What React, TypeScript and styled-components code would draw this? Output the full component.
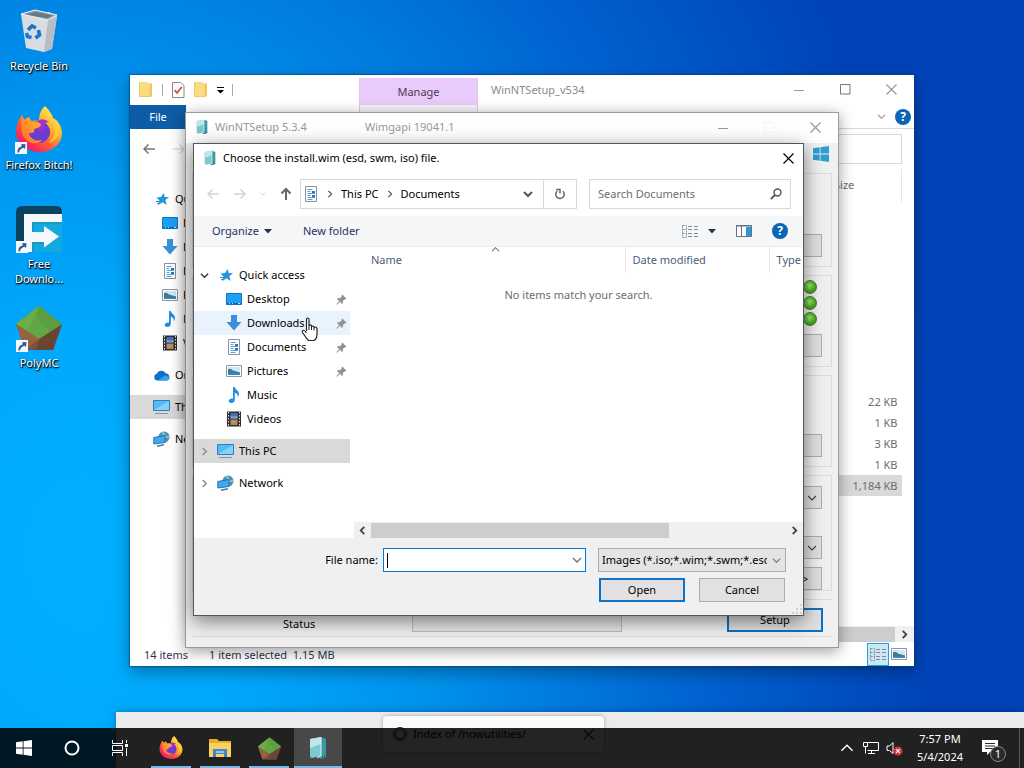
import React from "react";
import styled, { createGlobalStyle, css } from "styled-components";

const Global = createGlobalStyle`
  * { box-sizing: border-box; }
  body { margin: 0; overflow: hidden; }
  body, button, input, select, table {
    font-family: "Noto Sans", "Open Sans", sans-serif;
    font-size: 11px;
    line-height: 16px;
    color: #000;
  }
  button, input, select { margin: 0; padding: 0; border: 0; border-radius: 0; background: none; outline: none; }
  svg { display: block; flex: none; }
`;

/* ---------- icons ---------- */

type IconProps = { size?: number };

const Star = () => (
  <svg width="16" height="16" viewBox="0 0 16 16">
    <path d="M9.8 2 10.600 6 15 6.3 11.4 9 12.600 13.900 8.6 11.200 4 14.200 5.500 9.500 2.500 6.600 7 6z" fill="#2196dc" />
    <path d="M2 10.500h4M3 12.500h3" stroke="#2196dc" strokeWidth="1.200" />
  </svg>
);
const DesktopGlyph = () => (
  <svg width="16" height="16" viewBox="0 0 16 16">
    <path d="M.5 2.500h15v11H.5z" fill="#1aa0f4" stroke="#0c74c4" />
    <path d="M1 12.500h14" stroke="#0a62ae" />
    <path d="M3 12.500h1M6 12.500h1M12 12.500h2" stroke="#bfe3fa" />
  </svg>
);
const DownGlyph = () => (
  <svg width="16" height="16" viewBox="0 0 16 16">
    <path d="M5 0h6v7h4.500L8 15.500.5 7H5z" fill="#3b8edb" />
  </svg>
);
const DocGlyph = () => (
  <svg width="16" height="16" viewBox="0 0 16 16">
    <path d="M2.500.5h11v15h-11z" fill="#fff" stroke="#8793a0" />
    <path d="M4.500 3.500h5M4.500 5.500h3M4.500 7.500h7.500M4.500 9.500h3M4.500 11.500h7.500M4.500 13.500h5" stroke="#5a9fd8" />
    <path d="M9 5h3v2H9zM9 9h3v2H9z" fill="#1f78c4" />
  </svg>
);
const PictureGlyph = () => (
  <svg width="16" height="16" viewBox="0 0 16 16">
    <path d="M.5 2.500h15v11H.5z" fill="#fff" stroke="#8b98a3" />
    <path d="M2 4h12v8H2z" fill="#cfe8f8" />
    <path d="M2 6q3-1 5 1.500l7 2V12H2z" fill="#3f7d88" />
    <path d="M2 10.500h12V12H2z" fill="#3d86c8" />
  </svg>
);
const MusicGlyph = () => (
  <svg width="16" height="16" viewBox="0 0 16 16">
    <path d="M7 0h1.800c.2 2.600 4.600 3.600 4.200 7.600-.1 1.200-.6 2-1.200 2.700.5-2.500-1-3.900-3-4.500V13c0 1.600-1.500 3-3.400 3S2.800 15.200 2.800 13.800 4.200 11.400 5.800 11.400c.5 0 .9.100 1.200.2z" fill="#1e90e0" />
  </svg>
);
const VideoGlyph = () => (
  <svg width="16" height="16" viewBox="0 0 16 16">
    <path d="M1 .5h14v15H1z" fill="#2d2d33" />
    <path d="M2.500 1v14M13.500 1v14" stroke="#e8e8e8" strokeDasharray="1.500 1.500" />
    <path d="M4.500 2h7v5.500h-7z" fill="#466fbb" />
    <path d="M4.500 8.500h7V14h-7z" fill="#c08a35" />
    <path d="M4.500 4.500q3 2 7 0v3h-7zM5.500 10h4v2h-4z" fill="#7fa0d8" />
  </svg>
);
const CloudGlyph = () => (
  <svg width="16" height="16" viewBox="0 0 16 16">
    <path d="M3.500 13.500a3.400 3.400 0 0 1-.6-6.700A5 5 0 0 1 12 6.400a3.600 3.600 0 0 1 .6 7.100z" fill="#0f6fc6" />
    <path d="M3.500 13.500 11 8.600q4 .4 4.600 3-.6 1.900-3 1.900z" fill="#28a8ea" />
  </svg>
);
const PcGlyph = () => (
  <svg width="17" height="16" viewBox="0 0 17 16">
    <path d="M.5 1.500h16v10H.5z" fill="#56b8f5" stroke="#2b7fc0" />
    <path d="M1 11 16 2v9z" fill="#85d0fb" />
    <path d="M2 14.500h13" stroke="#7e93a3" />
  </svg>
);
const NetGlyph = () => (
  <svg width="17" height="16" viewBox="0 0 17 16">
    <circle cx="11" cy="6" r="5.500" fill="#4f90b8" />
    <path d="M9 1.500q4 2 2 4.500 3 1 5-1" fill="none" stroke="#9accc4" strokeWidth="1.500" />
    <path d="M.8 6.500 12 4.500v7L.8 13z" fill="#41a8ee" stroke="#2474b4" />
    <path d="M4 15.200l7-1.500" stroke="#3e7ea6" strokeWidth="1.500" />
  </svg>
);
const Pin = () => (
  <svg width="11" height="11" viewBox="0 0 11 11">
    <path d="M6.300.5 10.500 4.700l-1 .8-.8-.2L6.800 7.200l.1 1.900-.9.900L3.900 7.800.8 10.700.3 10.200 3.200 7.100 1 4.900l.9-.8 1.900.1L5.700 2.300l-.2-.9z" fill="#8d949a" />
  </svg>
);
const Package = ({ size = 16 }: IconProps) => (
  <svg width={size} height={size} viewBox="0 0 24 24">
    <path d="M4 3 15 1v19L6 22q-2 0-2-2z" fill="#7cc8cc" />
    <path d="M4 3 15 1v7L4 12z" fill="#bfe6e6" />
    <path d="M15 1l5 2v18l-5 2-4-2 4-1z" fill="#3c98a2" />
    <path d="M15 1v19l-4 1.500" fill="none" stroke="#e4f6f6" />
    <path d="M16.500 20v2M18.500 19v2" stroke="#1a6b80" />
  </svg>
);
const Folder = () => (
  <svg width="16" height="16" viewBox="0 0 16 16">
    <path d="M1 0h9v1.500h4V13l-1 2H1z" fill="#fadc80" />
    <path d="M11.500 1.500H14V13l-1 2h-1.500z" fill="#f0c860" />
    <path d="M1.500.5V15M1 14.500h12" stroke="#f0cb62" />
  </svg>
);
const TickPage = () => (
  <svg width="14" height="16" viewBox="0 0 14 16">
    <path d="M1.500.5h8l3.500 3v12H1.500z" fill="#fff" stroke="#888" />
    <path d="M3.500 8 6 10.800 10.800 5" fill="none" stroke="#d8503c" strokeWidth="1.800" />
  </svg>
);
const Chevron = ({ dir = "down", color = "#444", size = 9, weight = 1.500 }: { dir?: "down" | "up" | "left" | "right"; color?: string; size?: number; weight?: number }) => {
  const d = { down: "M1 3 5 7 9 3", up: "M1 7 5 3 9 7", left: "M7 1 3 5 7 9", right: "M3 1 7 5 3 9" }[dir];
  return (
    <svg width={size} height={size} viewBox="0 0 10 10">
      <path d={d} fill="none" stroke={color} strokeWidth={weight} />
    </svg>
  );
};
const Triangle = ({ color = "#2b2f45" }: { color?: string }) => (
  <svg width="8" height="5" viewBox="0 0 8 5"><path d="M0 0h8L4 4.500z" fill={color} /></svg>
);
const Overflow = () => (
  <svg width="7" height="8" viewBox="0 0 7 8"><path d="M0 1.500h7" stroke="#000" /><path d="M0 4h7L3.500 7.500z" fill="#000" /></svg>
);
const Arrow = ({ dir, color }: { dir: "left" | "right" | "up"; color: string }) => {
  const d = { left: "M13 7H2M6.500 2.500 2 7l4.500 4.500", right: "M1 7h11M7.500 2.500 12 7l-4.500 4.500", up: "M7 13V2M2.500 6.500 7 2l4.500 4.500" }[dir];
  return (
    <svg width="14" height="14" viewBox="0 0 14 14"><path d={d} fill="none" stroke={color} strokeWidth={dir === "up" ? 2 : 1.500} /></svg>
  );
};
const Minimise = ({ color }: { color: string }) => (
  <svg width="11" height="11" viewBox="0 0 11 11"><path d="M0 6.500h10" stroke={color} /></svg>
);
const Maximise = ({ color }: { color: string }) => (
  <svg width="11" height="11" viewBox="0 0 11 11"><path d="M.5.5h9.500v9.500H.5z" fill="none" stroke={color} /></svg>
);
const Close = ({ color }: { color: string }) => (
  <svg width="11" height="11" viewBox="0 0 11 11"><path d="M.5.5l10 10M10.500.5l-10 10" stroke={color} strokeWidth="1.200" /></svg>
);
const Windows = ({ size, color }: { size: number; color: string }) => (
  <svg width={size} height={size} viewBox="0 0 16 16">
    <path d="M0 2.200 6.700 1.300V7.600H0zM7.500 1.200 16 0v7.600H7.500zM0 8.400h6.700v6.300L0 13.800zM7.500 8.400H16V16l-8.500-1.200z" fill={color} />
  </svg>
);
const DetailsGlyph = () => (
  <svg width="17" height="13" viewBox="0 0 17 13">
    <path d="M.5.5h4v12h-4zM.5 4.500h4M.5 8.500h4" fill="none" stroke="#8a8f96" strokeDasharray="2 1" />
    <path d="M6 1.500h4M12 1.500h4M6 4.500h4M12 4.500h4M6 8.500h4M12 8.500h4M6 11.500h4M12 11.500h4" stroke="#85898f" />
  </svg>
);
const PaneGlyph = () => (
  <svg width="16" height="12" viewBox="0 0 16 12">
    <path d="M.5.5h15v11H.5z" fill="#fff" stroke="#5f7285" />
    <path d="M0 1h16M5.500 1v10" stroke="#5f7285" />
    <path d="M10 2h5v9h-5z" fill="#2f95dc" />
  </svg>
);
const Magnifier = () => (
  <svg width="12" height="12" viewBox="0 0 12 12">
    <circle cx="7.500" cy="4.500" r="3.500" fill="none" stroke="#555" strokeWidth="1.400" />
    <path d="M5 7 .8 11.200" stroke="#555" strokeWidth="1.800" />
  </svg>
);
const Refresh = () => (
  <svg width="12" height="12" viewBox="0 0 12 12">
    <path d="M8.800 3.200a4.200 4.200 0 1 1-5.400-.2" fill="none" stroke="#666" strokeWidth="1.500" />
    <path d="M2 1.500h4v4" fill="none" stroke="#666" strokeWidth="1.500" />
  </svg>
);
const Firefox = ({ size = 48 }: IconProps) => (
  <svg width={size} height={size} viewBox="0 0 48 48">
    <defs>
      <linearGradient id="fxBody" x1="0.850" y1="0.100" x2="0.200" y2="0.900">
        <stop offset="0" stopColor="#fff04a" />
        <stop offset=".35" stopColor="#ffb02e" />
        <stop offset=".65" stopColor="#ff5a36" />
        <stop offset="1" stopColor="#f0186a" />
      </linearGradient>
      <linearGradient id="fxHead" x1="1" y1="0" x2="0" y2="1">
        <stop offset="0" stopColor="#ffbf2a" />
        <stop offset="1" stopColor="#ff6a30" />
      </linearGradient>
    </defs>
    <path d="M30 0c4 4 7 8 8 12 5 2 9 9 9 15 0 11-10 19-22 19S1 38 1 26C1 19 4 13 7 9l2 5 4-3 3 4 8-1c0-5 2-11 6-14z" fill="url(#fxBody)" />
    <circle cx="24" cy="26" r="11" fill="#6c3bd0" />
    <path d="M22 15q6-4 12 1-4 0-5 3 2 5-4 7-5-4-3-11z" fill="#a532c8" />
    <path d="M7 9l2 5 5-3 3 5c4-1 8 0 9 3-1 3-6 3-7 5 1 3-2 3-5 3 1 6 7 9 13 7-4 6-17 4-20-7-1-6-1-12 0-18z" fill="url(#fxHead)" />
    <path d="M37 12c6 9 3 20-4 25 14-3 15-17 4-25z" fill="#ffd23c" opacity=".7" />
  </svg>
);
const PolyMC = ({ size = 46 }: IconProps) => (
  <svg width={size} height={size} viewBox="0 0 46 46">
    <path d="M23 1 46 19 37 45H9L0 19z" fill="#805038" />
    <path d="M23 34 46 19 37 45H20z" fill="#6a4531" />
    <path d="M0 19 23 34 9 45z" fill="#9a6042" />
    <path d="M23 1 46 19 23 34 0 19z" fill="#62a744" />
    <path d="M23 1 46 19 34 26 20 12z" fill="#5b9f43" />
    <path d="M23 1 12 26 0 19z" fill="#6aae48" />
  </svg>
);
const RecycleBin = () => (
  <svg width="40" height="44" viewBox="0 0 40 44">
    <path d="M2 5 30 3l8 4-5 33-8 3-18-4z" fill="#d9dde1" />
    <path d="M29 11 38 7l-5 33-8 3z" fill="#b7bdc4" />
    <path d="M2 5 16 1l22 5-9 5z" fill="#8a9aa6" />
    <path d="M6 5.500 17 3l16 3.500-5 2.500z" fill="#657986" />
    <path d="M2 5l27 6 9-5M2 5l14-4 22 5" fill="none" stroke="#eef3f6" />
    <path d="M9 21l4-4 4 2M19.500 21l1 5-4 3M12.500 28.500l-4-1-1-3.500" fill="none" stroke="#1a76cc" strokeWidth="3.600" />
  </svg>
);
const FreeDownload = () => (
  <svg width="46" height="46" viewBox="0 0 46 46">
    <path d="M6 0h34q6 0 6 6v6H16v34H0V6q0-6 6-6z" fill="#0b4260" />
    <path d="M14 14h32v32H14z" fill="#14a9dd" />
    <path d="M8 8h38v8H16v10h12v-6l15 10.500-15 11V36H16v10H8z" fill="#f3f8fa" />
    <path d="M16 16h30v2H18v8h-2zM16 36h12v2H18v8h-2z" fill="#1a88b4" opacity=".5" />
  </svg>
);
const ShortcutMark = () => (
  <svg width="12" height="12" viewBox="0 0 12 12">
    <path d="M0 0h12v12H0z" fill="#f4f6f8" />
    <path d="M2.500 10.500q-.5-5 4-6V2l4 .300-.5 4.700-1.500-1.200Q4.500 7 4 10.500z" fill="#2c5ca0" />
  </svg>
);
const FileManager = () => (
  <svg width="24" height="24" viewBox="0 0 24 24">
    <path d="M1 3h8l2 2h12v16H1z" fill="#e8a92c" />
    <path d="M1 7h22v14H1z" fill="#fbd35c" />
    <path d="M5 13h14v8h-3v-3H8v3H5z" fill="#3d86d0" />
    <path d="M8 15h8v2H8z" fill="#8cc4f2" />
  </svg>
);
const Hand = () => (
  <svg width="17" height="25" viewBox="0 0 17 25">
    <path d="M5.500 14V2.500q0-1.500 1.200-1.500T8 2.500V9q0-1.200 1.200-1.200T10.500 9v1q0-1 1.200-1t1.300 1v1q0-1 1.300-1T16 11.500V17q0 5-3 6.500H7.500Q5 21 1.500 15.500q-.6-1.600.6-2.200 1.200-.4 3.400 2.500" fill="#fff" stroke="#222" strokeWidth="1.200" />
    <path d="M8 9v4M10.500 10v3M13 11v2.500" stroke="#222" />
  </svg>
);

/* ---------- desktop ---------- */

const Desktop = styled.main`
  position: relative;
  height: 100vh;
  overflow: hidden;
  background: radial-gradient(ellipse 88% 150% at 8% 72%, #00b0ff 0%, #00a8fc 20%, #0092ec 40%, #0062d0 70%, #0043b8 95%);
`;
const Shortcuts = styled.nav`
  display: flex;
  flex-direction: column;
  width: 78px;
  padding-top: 7px;
`;
const Shortcut = styled.a`
  display: flex;
  flex-direction: column;
  align-items: center;
  height: 99px;
  color: #fff;
  text-align: center;
  text-decoration: none;
  text-shadow: 0 1px 2px #000, 1px 1px 1px #000;
`;
const Picture = styled.span`
  position: relative;
  display: flex;
  align-items: center;
  justify-content: center;
  height: 48px;
`;
const Mark = styled.span`
  position: absolute;
  left: 0;
  bottom: 0;
`;
const Caption = styled.span`
  width: 78px;
  padding-top: 3px;
  line-height: 15px;
  white-space: pre-line;
`;

const windowFrame = css`
  position: absolute;
  display: flex;
  flex-direction: column;
`;
const Row = styled.div`
  display: flex;
  align-items: center;
`;
const Spacer = styled.div`
  flex: 1;
`;
const IconButton = styled.button<{ $w?: number; $h?: number }>`
  display: flex;
  flex: none;
  align-items: center;
  justify-content: center;
  width: ${(p) => p.$w ?? 24}px;
  height: ${(p) => p.$h ?? 24}px;
`;
const HelpButton = styled.button`
  width: 16px;
  height: 16px;
  border-radius: 50%;
  background: #0a64b8;
  color: #fff;
  font-weight: 700;
  font-size: 12px;
`;

/* ---------- navigation tree ---------- */

const Tree = styled.ul`
  list-style: none;
  margin: 0;
  padding: 0;
  width: 156px;
  flex: none;
`;
const Branch = styled.li<{ $gap?: boolean }>`
  margin-top: ${(p) => (p.$gap ? 8 : 0)}px;
`;
const TreeItem = styled.button<{ $sub?: boolean; $tone?: string }>`
  display: flex;
  align-items: center;
  width: 100%;
  height: 24px;
  padding: 0 3px 0 ${(p) => (p.$sub ? 31 : 6)}px;
  background: ${(p) => p.$tone ?? "transparent"};
  white-space: nowrap;
`;
const Expander = styled.span`
  width: 17px;
`;
const TreeIcon = styled.span`
  display: flex;
  justify-content: center;
  width: 17px;
  margin-right: 5px;
`;
const TreeLabel = styled.span`
  flex: 1;
  text-align: left;
`;

const folders = [
  { name: "Desktop", icon: <DesktopGlyph />, pinned: true },
  { name: "Downloads", icon: <DownGlyph />, pinned: true },
  { name: "Documents", icon: <DocGlyph />, pinned: true },
  { name: "Pictures", icon: <PictureGlyph />, pinned: true },
  { name: "Music", icon: <MusicGlyph />, pinned: false },
  { name: "Videos", icon: <VideoGlyph />, pinned: false },
];

const NavTree = ({ full, hovered }: { full?: boolean; hovered?: string }) => {
  const root = (name: string, icon: React.ReactNode, dir: "down" | "right", tone?: string, gap?: boolean) => (
    <Branch $gap={gap}>
      <TreeItem $tone={tone}>
        <Expander>{full && <Chevron dir={dir} color={dir === "down" ? "#333" : "#888"} />}</Expander>
        <TreeIcon>{icon}</TreeIcon>
        <TreeLabel>{name}</TreeLabel>
      </TreeItem>
    </Branch>
  );
  return (
    <Tree>
      {root("Quick access", <Star />, "down")}
      {folders.map((f) => (
        <Branch key={f.name}>
          <TreeItem $sub $tone={hovered === f.name ? "#e8f3fd" : undefined}>
            <TreeIcon>{f.icon}</TreeIcon>
            <TreeLabel>{f.name}</TreeLabel>
            {full && f.pinned && <Pin />}
          </TreeItem>
        </Branch>
      ))}
      {!full && root("OneDrive", <CloudGlyph />, "right", undefined, true)}
      {root("This PC", <PcGlyph />, "right", "#d9d9d9", true)}
      {root("Network", <NetGlyph />, "right", undefined, true)}
    </Tree>
  );
};

/* ---------- file manager window ---------- */

const Explorer = styled.section`
  ${windowFrame}
  left: 130px;
  top: 75px;
  width: 784px;
  height: 591px;
  background: #fff;
  box-shadow: 0 0 1px 1px rgba(0, 60, 120, 0.5), 0 6px 16px rgba(0, 0, 0, 0.35);
`;
const ExplorerTitle = styled(Row)`
  align-items: flex-start;
  height: 30px;
  color: #8b8b8b;
`;
const QuickBar = styled(Row)`
  width: 229px;
  height: 30px;
  padding-left: 8px;
  gap: 8px;
`;
const Divider = styled.span`
  width: 1px;
  height: 12px;
  background: #aaa;
`;
const ManageTab = styled.div`
  width: 119px;
  height: 35px;
  margin-top: 3px;
  border: 1px solid #dcc8ea;
  border-top: 0;
  background: linear-gradient(#e8cbfb 27px, #f6f4f7 27px);
  color: #4c3a58;
  line-height: 27px;
  text-align: center;
`;
const WindowName = styled.span`
  padding: 7px 0 0 13px;
`;
const RibbonTabs = styled(Row)`
  height: 24px;
  border-bottom: 1px solid #d8d8d8;
  padding-right: 3px;
  gap: 4px;
`;
const FileTab = styled.button`
  width: 56px;
  height: 24px;
  background: #0d5ca6;
  color: #fff;
`;
const ExplorerNav = styled(Row)`
  height: 40px;
  padding: 0 12px;
  gap: 16px;
`;
const SearchStub = styled.input`
  width: 120px;
  height: 30px;
  border: 1px solid #d9d9d9 !important;
`;
const ExplorerBody = styled.div`
  display: flex;
  flex: 1;
  min-height: 0;
`;
const TreePane = styled.div<{ $top: number }>`
  padding-top: ${(p) => p.$top}px;
`;
const FilePane = styled.div`
  display: flex;
  flex: 1;
  flex-direction: column;
  align-items: flex-end;
  min-width: 0;
`;
const SizeTable = styled.table`
  width: 80px;
  margin-right: 12px;
  border-collapse: collapse;
  color: #6d6d6d;
  text-align: right;
  th { height: 33px; padding: 0 0 2px 12px; border-right: 1px solid #e5e5e5; font-weight: 400; text-align: left; }
  td { height: 21px; padding: 0 4px 0 0; }
`;
const SizeRow = styled.tr<{ $selected?: boolean }>`
  background: ${(p) => (p.$selected ? "#d9d9d9" : "transparent")};
`;
const ScrollTrack = styled.div`
  display: flex;
  align-items: center;
  width: 100%;
  height: 16px;
  background: #f0f0f0;
`;
const ScrollThumb = styled.div<{ $w: string }>`
  width: ${(p) => p.$w};
  height: 15px;
  background: #cdcdcd;
`;
const StatusBar = styled(Row)`
  height: 24px;
  padding: 0 5px 0 14px;
  color: #2c3650;
`;
const StatusText = styled.span`
  margin-right: 21px;
  padding-top: 1px;
  white-space: pre;
`;
const ViewButton = styled(IconButton)<{ $on?: boolean }>`
  border: 1px solid ${(p) => (p.$on ? "#26a0da" : "transparent")};
  background: ${(p) => (p.$on ? "#cbe8f6" : "none")};
`;

const sizes = ["", "", "", "", "", "", "", "", "", "22 KB", "1 KB", "3 KB", "1 KB", "1,184 KB"];

const ExplorerWindow = () => (
  <Explorer aria-label="WinNTSetup_v534">
    <ExplorerTitle>
      <QuickBar>
        <Folder />
        <Divider />
        <TickPage />
        <Folder />
        <Overflow />
        <Divider />
      </QuickBar>
      <ManageTab>Manage</ManageTab>
      <WindowName>WinNTSetup_v534</WindowName>
      <Spacer />
      <IconButton $w={46} $h={28} aria-label="Minimize"><Minimise color="#999" /></IconButton>
      <IconButton $w={46} $h={28} aria-label="Maximize"><Maximise color="#777" /></IconButton>
      <IconButton $w={46} $h={28} aria-label="Close"><Close color="#999" /></IconButton>
    </ExplorerTitle>
    <RibbonTabs>
      <FileTab>File</FileTab>
      <Spacer />
      <IconButton $w={20} aria-label="Expand ribbon"><Chevron color="#aaa" /></IconButton>
      <HelpButton aria-label="Help">?</HelpButton>
    </RibbonTabs>
    <ExplorerNav>
      <Arrow dir="left" color="#777" />
      <Arrow dir="right" color="#ddd" />
      <Spacer />
      <SearchStub aria-label="Search" />
    </ExplorerNav>
    <ExplorerBody>
      <TreePane $top={18}><NavTree /></TreePane>
      <FilePane>
        <SizeTable>
          <thead><tr><th>Size</th></tr></thead>
          <tbody>
            {sizes.map((s, i) => (
              <SizeRow key={i} $selected={i === 13}><td>{s}</td></SizeRow>
            ))}
          </tbody>
        </SizeTable>
        <Spacer />
        <ScrollTrack>
          <ScrollThumb $w="calc(100% - 19px)" />
          <IconButton $w={19} $h={16} aria-label="Scroll right"><Chevron dir="right" weight={2} /></IconButton>
        </ScrollTrack>
      </FilePane>
    </ExplorerBody>
    <StatusBar>
      <StatusText>14 items</StatusText>
      <StatusText>{"1 item selected  1.15 MB"}</StatusText>
      <Spacer />
      <ViewButton $w={22} $h={23} $on aria-label="Details view"><DetailsGlyph /></ViewButton>
      <ViewButton $w={20} $h={23} aria-label="Thumbnails"><PictureGlyph /></ViewButton>
    </StatusBar>
  </Explorer>
);

/* ---------- setup window ---------- */

const Setup = styled.section`
  ${windowFrame}
  left: 185px;
  top: 112px;
  width: 654px;
  height: 536px;
  border: 1px solid #9a9a9a;
  background: #f0f0f0;
  box-shadow: 0 3px 14px rgba(0, 0, 0, 0.4);
`;
const SetupTitle = styled(Row)`
  height: 30px;
  padding: 0 0 2px 8px;
  background: #fff;
  color: #999;
`;
const SetupName = styled.span`
  width: 155px;
  padding-left: 5px;
`;
const SetupBody = styled.div`
  display: flex;
  flex: 1;
  flex-direction: column;
  gap: 8px;
  padding: 0 6px 10px;
`;
const SetupTools = styled(Row)`
  justify-content: flex-end;
  height: 22px;
  padding: 0 3px;
`;
const Group = styled.div<{ $h: number; $end?: boolean; $pad?: number }>`
  display: flex;
  flex: none;
  flex-direction: column;
  align-items: flex-end;
  justify-content: ${(p) => (p.$end ? "flex-end" : "flex-start")};
  gap: 8px;
  height: ${(p) => p.$h}px;
  padding: ${(p) => p.$pad ?? 9}px 9px 9px;
  border: 1px solid #dcdcdc;
`;
const PlainButton = styled.button`
  display: flex;
  flex: none;
  align-items: center;
  justify-content: center;
  width: 40px;
  height: 23px;
  border: 1px solid #adadad;
  background: #e1e1e1;
`;
const DropButton = styled(PlainButton)`
  justify-content: flex-end;
  padding-right: 4px;
`;
const DropGroup = styled.div`
  display: flex;
  flex-direction: column;
  gap: 27px;
`;
const Lights = styled.div`
  display: flex;
  flex-direction: column;
  gap: 2px;
  padding-right: 5px;
`;
const Light = styled.span`
  width: 14px;
  height: 14px;
  border: 1px solid #4c7a3a;
  border-radius: 50%;
  background: radial-gradient(circle at 45% 40%, #a8ee70, #4eb828 50%, #24780e);
`;
const SetupFooter = styled(Row)`
  flex: 1;
  align-items: flex-end;
  padding: 0 9px 4px 91px;
  border-top: 1px solid #dcdcdc;
  border-bottom: 1px solid #dcdcdc;
`;
const Progress = styled.div`
  width: 210px;
  height: 24px;
  margin-left: 97px;
  border: 1px solid #bcbcbc;
  background: #e6e6e6;
`;
const PrimaryButton = styled.button<{ $w: number }>`
  width: ${(p) => p.$w}px;
  height: 24px;
  border: 2px solid #0b72c8;
  background: #e1e1e1;
`;

const SetupWindow = () => (
  <Setup aria-label="WinNTSetup 5.3.4">
    <SetupTitle>
      <Package />
      <SetupName>WinNTSetup 5.3.4</SetupName>
      <span>Wimgapi 19041.1</span>
      <Spacer />
      <IconButton $w={46} $h={28} aria-label="Minimize"><Minimise color="#999" /></IconButton>
      <IconButton $w={46} $h={28} aria-label="Maximize"><Maximise color="#f4f4f4" /></IconButton>
      <IconButton $w={46} $h={28} aria-label="Close"><Close color="#999" /></IconButton>
    </SetupTitle>
    <SetupBody>
      <SetupTools><Windows size={16} color="#2d9fd0" /></SetupTools>
      <Group $h={94} $end><PlainButton aria-label="Browse source" /></Group>
      <Group $h={92} $pad={4}>
        <Lights><Light /><Light /><Light /></Lights>
        <PlainButton aria-label="Select boot drive" />
      </Group>
      <Group $h={92} $end><PlainButton aria-label="Select installation drive" /></Group>
      <Group $h={116} $pad={10}>
        <DropGroup>
          <DropButton aria-label="Edition"><Chevron size={10} weight={1.200} /></DropButton>
          <DropButton aria-label="Mount letter"><Chevron size={10} weight={1.200} /></DropButton>
        </DropGroup>
        <PlainButton>&gt;&gt;</PlainButton>
      </Group>
      <SetupFooter>
        <span>Status</span>
        <Progress role="progressbar" aria-label="Status" />
        <Spacer />
        <PrimaryButton $w={96}>Setup</PrimaryButton>
      </SetupFooter>
    </SetupBody>
  </Setup>
);

/* ---------- open dialog ---------- */

const Dialog = styled.section`
  ${windowFrame}
  left: 193px;
  top: 143px;
  width: 611px;
  height: 473px;
  border: 1px solid #555;
  background: #fff;
  box-shadow: 0 5px 18px rgba(0, 0, 0, 0.5);
`;
const DialogTitle = styled(Row)`
  height: 30px;
  padding: 0 0 2px 8px;
  gap: 5px;
`;
const AddressRow = styled(Row)`
  height: 42px;
  padding: 0 12px 2px;
`;
const History = styled(Row)`
  width: 94px;
  gap: 13px;
`;
const Address = styled(Row)`
  flex: 1;
  height: 30px;
  padding-left: 2px;
  gap: 7px;
  border: 1px solid #d9d9d9;
`;
const RefreshButton = styled(IconButton)`
  border: 1px solid #d9d9d9;
  border-left: 0;
`;
const SearchBox = styled.label`
  display: flex;
  align-items: center;
  width: 202px;
  height: 30px;
  margin-left: 12px;
  padding: 0 8px;
  border: 1px solid #d9d9d9;
`;
const SearchInput = styled.input`
  flex: 1;
  min-width: 0;
  &::placeholder { color: #6d6d6d; opacity: 1; }
`;
const ToolRow = styled(Row)`
  height: 31px;
  padding: 0 15px 0 18px;
  border-bottom: 1px solid #e8eaec;
  background: #f5f6f7;
`;
const ToolButton = styled.button`
  display: flex;
  align-items: center;
  gap: 5px;
  margin-right: 31px;
  color: #1e3264;
`;
const ToolIcons = styled(Row)`
  gap: 9px;
`;
const DialogBody = styled.div`
  display: flex;
  flex: 1;
  min-height: 0;
`;
const ListPane = styled.div`
  display: flex;
  flex: 1;
  flex-direction: column;
  min-width: 0;
  padding-left: 4px;
`;
const Columns = styled.table`
  width: 100%;
  table-layout: fixed;
  border-collapse: collapse;
  th {
    height: 26px;
    padding: 0 0 0 7px;
    overflow: hidden;
    border-right: 1px solid #e5e5e5;
    color: #4c607a;
    font-weight: 400;
    text-align: left;
  }
  th:first-child { width: 271px; padding-left: 17px; }
  th:nth-child(2) { width: 144px; }
  th:last-child { border-right: 0; }
  td { height: 44px; padding-right: 1px; color: #6d6d6d; text-align: center; }
`;
const NameHead = styled.span`
  position: relative;
  display: block;
`;
const SortMark = styled.span`
  position: absolute;
  top: -7px;
  left: 120px;
`;
const DialogFooter = styled.form`
  position: relative;
  display: flex;
  flex-direction: column;
  gap: 6px;
  height: 77px;
  padding: 10px 17px 0 0;
  background: #f0f0f0;
`;
const FieldRow = styled(Row)<{ $inset?: number }>`
  justify-content: flex-end;
  padding-right: ${(p) => p.$inset ?? 0}px;
`;
const FieldLabel = styled.label`
  margin-right: 5px;
`;
const ComboBox = styled.div`
  display: flex;
  align-items: center;
  width: 203px;
  height: 24px;
  padding: 0 3px;
  border: 1px solid #0078d7;
  background: #fff;
`;
const Caret = styled.span`
  width: 1px;
  height: 15px;
  background: #000;
`;
const FileInput = styled.input`
  flex: 1;
  min-width: 0;
`;
const FilterBox = styled.div`
  position: relative;
  width: 188px;
  margin-left: 12px;
`;
const Filter = styled.select`
  display: block;
  width: 100%;
  height: 24px;
  padding: 0 18px 0 3px;
  border: 1px solid #adadad;
  background: #e4e4e4;
  appearance: none;
`;
const FilterArrow = styled.span`
  position: absolute;
  top: 8px;
  right: 5px;
  pointer-events: none;
`;
const CancelButton = styled.button`
  width: 86px;
  height: 24px;
  margin-left: 14px;
  border: 1px solid #adadad;
  background: #e1e1e1;
`;
const Grip = styled.span`
  position: absolute;
  right: 1px;
  bottom: 1px;
`;

const OpenDialog = () => (
  <Dialog role="dialog" aria-label="Choose the install.wim (esd, swm, iso) file.">
    <DialogTitle>
      <Package />
      <span>Choose the install.wim (esd, swm, iso) file.</span>
      <Spacer />
      <IconButton $w={30} $h={28} aria-label="Close"><Close color="#000" /></IconButton>
    </DialogTitle>
    <AddressRow>
      <History>
        <Arrow dir="left" color="#d4d4d4" />
        <Arrow dir="right" color="#d4d4d4" />
        <Chevron size={6} color="#ccc" />
        <Arrow dir="up" color="#666" />
      </History>
      <Address>
        <DocGlyph />
        <Chevron dir="right" size={8} color="#555" />
        <span>This PC</span>
        <Chevron dir="right" size={8} color="#555" />
        <span>Documents</span>
        <Spacer />
        <IconButton $w={30} aria-label="Previous locations"><Chevron size={10} color="#555" weight={2} /></IconButton>
      </Address>
      <RefreshButton $w={33} $h={30} aria-label="Refresh"><Refresh /></RefreshButton>
      <SearchBox>
        <SearchInput type="text" placeholder="Search Documents" aria-label="Search Documents" />
        <Magnifier />
      </SearchBox>
    </AddressRow>
    <ToolRow>
      <ToolButton>Organize <Triangle /></ToolButton>
      <ToolButton>New folder</ToolButton>
      <Spacer />
      <ToolIcons>
        <DetailsGlyph />
        <Triangle />
        <IconButton $w={38} aria-label="Preview pane"><PaneGlyph /></IconButton>
        <HelpButton aria-label="Help">?</HelpButton>
      </ToolIcons>
    </ToolRow>
    <DialogBody>
      <TreePane $top={16}><NavTree full hovered="Downloads" /></TreePane>
      <ListPane>
        <Columns>
          <thead>
            <tr>
              <th><NameHead>Name<SortMark><Chevron dir="up" color="#777" weight={1.200} /></SortMark></NameHead></th>
              <th>Date modified</th>
              <th>Type</th>
            </tr>
          </thead>
          <tbody><tr><td colSpan={3}>No items match your search.</td></tr></tbody>
        </Columns>
        <Spacer />
        <ScrollTrack>
          <IconButton $w={17} $h={16} aria-label="Scroll left"><Chevron dir="left" weight={2} /></IconButton>
          <ScrollThumb $w="298px" />
          <Spacer />
          <IconButton $w={17} $h={16} aria-label="Scroll right"><Chevron dir="right" weight={2} /></IconButton>
        </ScrollTrack>
      </ListPane>
    </DialogBody>
    <DialogFooter onSubmit={(e) => e.preventDefault()}>
      <FieldRow>
        <FieldLabel htmlFor="file-name">File name:</FieldLabel>
        <ComboBox>
          <Caret />
          <FileInput id="file-name" type="text" />
          <Chevron size={10} color="#777" />
        </ComboBox>
        <FilterBox>
          <Filter aria-label="File type"><option>Images (*.iso;*.wim;*.swm;*.esd)</option></Filter>
          <FilterArrow><Chevron color="#888" /></FilterArrow>
        </FilterBox>
      </FieldRow>
      <FieldRow $inset={1}>
        <PrimaryButton $w={86}>Open</PrimaryButton>
        <CancelButton type="button">Cancel</CancelButton>
      </FieldRow>
      <Grip>
        <svg width="10" height="10" viewBox="0 0 10 10">
          <path d="M8 0h2v2H8zM8 4h2v2H8zM4 4h2v2H4zM8 8h2v2H8zM4 8h2v2H4zM0 8h2v2H0z" fill="#cfcfcf" />
        </svg>
      </Grip>
    </DialogFooter>
  </Dialog>
);

const Cursor = styled.div`
  position: absolute;
  left: 301px;
  top: 317px;
`;

/* ---------- browser strip and taskbar ---------- */

const Browser = styled.section`
  position: absolute;
  left: 116px;
  right: 0;
  bottom: 0;
  display: flex;
  height: 56px;
  padding-top: 4px;
  background: #ebebee;
  box-shadow: 0 0 8px rgba(0, 0, 0, 0.3);
`;
const BrowserTab = styled.div<{ $w: number; $on?: boolean }>`
  display: flex;
  align-items: center;
  gap: 6px;
  width: ${(p) => p.$w}px;
  height: 36px;
  padding: 0 10px;
  border-radius: 4px;
  background: ${(p) => (p.$on ? "#fafafa" : "none")};
  box-shadow: ${(p) => (p.$on ? "0 0 4px rgba(0, 0, 0, 0.3)" : "none")};
`;
const Favicon = styled.span`
  width: 14px;
  height: 14px;
  border: 3px double #222;
  border-radius: 50%;
`;
const Taskbar = styled.footer`
  position: absolute;
  left: 0;
  right: 0;
  bottom: 0;
  display: flex;
  height: 40px;
  padding-right: 4px;
  background: rgba(0, 0, 0, 0.86);
  color: #fff;
`;
const Apps = styled.div`
  display: flex;
  gap: 1px;
  padding-left: 3px;
`;
const AppButton = styled.button<{ $active?: boolean }>`
  display: flex;
  align-items: center;
  justify-content: center;
  width: 48px;
  height: 40px;
  background: ${(p) => (p.$active ? "#484848" : "none")};
  background-image: linear-gradient(#76b9ed, #76b9ed);
  background-position: center bottom;
  background-repeat: no-repeat;
  background-size: ${(p) => (p.$active ? 48 : 40)}px 2px;
`;
const Clock = styled.time`
  display: flex;
  flex-direction: column;
  justify-content: center;
  width: 68px;
  line-height: 18px;
  text-align: center;
`;
const Notify = styled(IconButton)`
  position: relative;
  justify-content: flex-start;
  padding-left: 8px;
`;
const Badge = styled.span`
  position: absolute;
  left: 16px;
  top: 18px;
  width: 16px;
  height: 16px;
  border: 1px solid #888;
  border-radius: 50%;
  background: #2b2b2b;
  color: #fff;
  line-height: 14px;
`;
const ShowDesktop = styled.button`
  width: 1px;
  height: 40px;
  background: #555;
`;

const shortcuts = [
  { label: "Recycle Bin", icon: <RecycleBin />, link: false },
  { label: "Firefox Bitch!", icon: <Firefox />, link: true },
  { label: "Free\nDownlo...", icon: <FreeDownload />, link: true },
  { label: "PolyMC", icon: <PolyMC />, link: true },
];

export default function App() {
  return (
    <Desktop>
      <Global />
      <Shortcuts>
        {shortcuts.map((s) => (
          <Shortcut key={s.label} href="#">
            <Picture>{s.icon}{s.link && <Mark><ShortcutMark /></Mark>}</Picture>
            <Caption>{s.label}</Caption>
          </Shortcut>
        ))}
      </Shortcuts>
      <ExplorerWindow />
      <SetupWindow />
      <OpenDialog />
      <Cursor><Hand /></Cursor>
      <Browser>
        <BrowserTab $w={267} />
        <BrowserTab $w={221} $on>
          <Favicon />
          <span>Index of /nowutilities/</span>
          <Spacer />
          <Close color="#333" />
        </BrowserTab>
      </Browser>
      <Taskbar>
        <IconButton $w={48} $h={40} aria-label="Start"><Windows size={16} color="#fff" /></IconButton>
        <IconButton $w={48} $h={40} aria-label="Cortana">
          <svg width="16" height="16" viewBox="0 0 16 16"><circle cx="8" cy="8" r="6.500" fill="none" stroke="#fff" strokeWidth="2" /></svg>
        </IconButton>
        <IconButton $w={48} $h={40} aria-label="Task view">
          <svg width="17" height="16" viewBox="0 0 17 16">
            <path d="M.5 0v3.500h10V0M.5 16v-3.500h10V16M.5 5.500h10v5H.5zM14.500 0v3M14.500 8v8" fill="none" stroke="#fff" />
            <path d="M13 4h3v3h-3z" fill="#fff" />
          </svg>
        </IconButton>
        <Apps>
          <AppButton aria-label="Firefox"><Firefox size={24} /></AppButton>
          <AppButton aria-label="File Explorer"><FileManager /></AppButton>
          <AppButton aria-label="PolyMC"><PolyMC size={23} /></AppButton>
          <AppButton aria-label="WinNTSetup" $active><Package size={24} /></AppButton>
        </Apps>
        <Spacer />
        <IconButton $w={24} $h={40} aria-label="Hidden icons"><Chevron dir="up" size={14} color="#fff" weight={1} /></IconButton>
        <IconButton $w={24} $h={40} aria-label="Network">
          <svg width="17" height="14" viewBox="0 0 17 14">
            <path d="M4.500 1.500h11v8h-11M5 12.500h7M8.500 10v2.500M.5 1.500h4v4h-4zM2.500 5.500v7" fill="none" stroke="#fff" />
          </svg>
        </IconButton>
        <IconButton $w={23} $h={40} aria-label="Volume">
          <svg width="17" height="15" viewBox="0 0 17 15">
            <path d="M1 5h2.500L7 1.500v11L3.500 9.500H1z" fill="none" stroke="#fff" />
            <circle cx="12" cy="10" r="4.500" fill="#d8343c" />
            <path d="M10.200 8.200l3.600 3.600M13.800 8.200l-3.600 3.600" stroke="#fff" strokeWidth="1.200" />
          </svg>
        </IconButton>
        <Clock dateTime="2024-05-04T19:57"><span>7:57 PM</span><span>5/4/2024</span></Clock>
        <Notify $w={45} $h={40} aria-label="Notifications">
          <svg width="16" height="16" viewBox="0 0 16 16">
            <path d="M0 0h16v12H8l-3 3v-3H0z" fill="#fff" />
            <path d="M3 3.500h10M3 6h10M3 8.500h10" stroke="#2b2b2b" />
          </svg>
          <Badge>1</Badge>
        </Notify>
        <ShowDesktop aria-label="Show desktop" />
      </Taskbar>
    </Desktop>
  );
}
